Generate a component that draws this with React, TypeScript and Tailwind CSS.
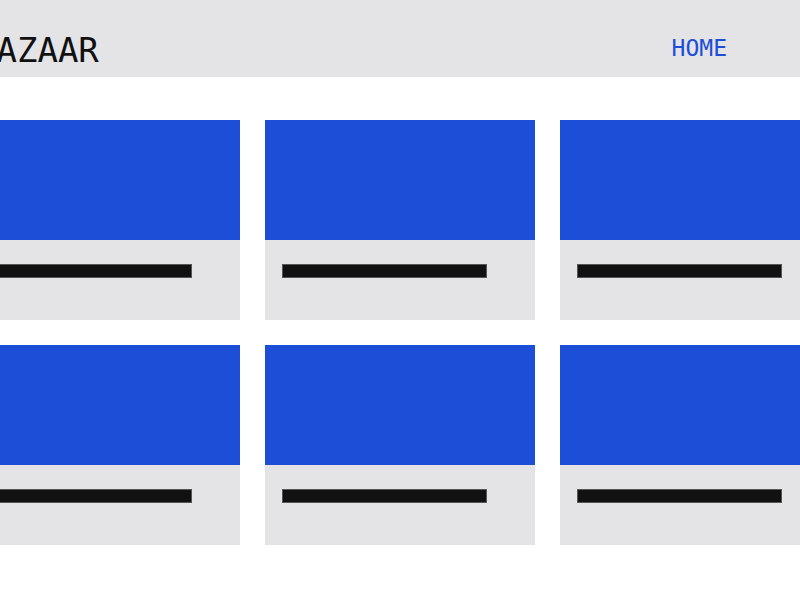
import React from 'react';

const cards = [1, 2, 3, 4, 5, 6];

const Card: React.FC = () => (
  <div className="flex flex-col">
    <div className="h-[120px] bg-[#1d4ed8]" />
    <div className="h-[80px] bg-[#e4e4e7] pl-[17px] pt-6">
      <div className="h-[14px] w-[205px] bg-[#111111] border border-[#555]" />
    </div>
  </div>
);

export default function App() {
  return (
    <div className="min-h-screen w-full overflow-hidden bg-white font-['DejaVu_Sans_Mono',monospace]">
      <header className="h-[77px] bg-[#e4e4e7] flex justify-center">
        <div className="w-[860px] shrink-0 flex items-center justify-between pt-[22px] pl-[6px] pr-[103px]">
          <span className="text-[34px] leading-none text-[#111111]">BAZAAR</span>
          <nav className="pt-[1px]">
            <a className="text-[23px] leading-none text-[#1d4ed8]">HOME</a>
          </nav>
        </div>
      </header>
      <main className="flex justify-center pt-[43px]">
        <div className="w-[860px] shrink-0 grid grid-cols-3 gap-[25px]">
          {cards.map((c) => (
            <Card key={c} />
          ))}
        </div>
      </main>
    </div>
  );
}
